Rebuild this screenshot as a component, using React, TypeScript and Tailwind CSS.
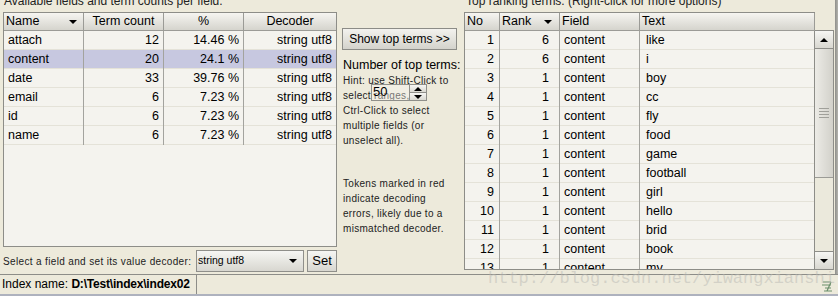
const fields = [
  { name: 'attach', count: 12, pct: '14.46 %' },
  { name: 'content', count: 20, pct: '24.1 %' },
  { name: 'date', count: 33, pct: '39.76 %' },
  { name: 'email', count: 6, pct: '7.23 %' },
  { name: 'id', count: 6, pct: '7.23 %' },
  { name: 'name', count: 6, pct: '7.23 %' },
];

const terms = ['like', 'i', 'boy', 'cc', 'fly', 'food', 'game', 'football', 'girl', 'hello', 'brid', 'book', 'my'];

function SortArrow() {
  return <span className="w-0 h-0 border-l-[4px] border-r-[4px] border-t-[4px] border-l-transparent border-r-transparent border-t-black" />;
}

function UpArrow() {
  return <span className="w-0 h-0 border-l-[4px] border-r-[4px] border-b-[4px] border-l-transparent border-r-transparent border-b-black" />;
}

const headCell = 'h-[17px] leading-[17px] border-r border-[#9b9b96] bg-gradient-to-b from-[#f6f5f1] to-[#d5d4cd]';

export default function App() {
  return (
    <div className="relative w-[838px] h-[296px] overflow-hidden bg-[#edeadb] font-['Liberation_Sans',sans-serif] text-black flex flex-col">
      <div className="flex h-[274px]">
        {/* left: fields */}
        <div className="w-[340px] flex flex-col">
          <div className="h-[12px] overflow-hidden pl-[4px]">
            <div className="-mt-[6px] text-[12px] leading-[14px] text-[#222]">Available fields and term counts per field.</div>
          </div>
          <div className="ml-[3px] w-[334px] h-[235px] border border-[#8d8d88] bg-[#f4f3ee] flex flex-col">
            <div className="grid grid-cols-[80px_80px_80px_1fr] border-b border-[#9b9b96] text-[12.5px]">
              <div className={`${headCell} pl-[2px] pr-[6px] flex items-center justify-between`}>
                <span>Name</span>
                <SortArrow />
              </div>
              <div className={`${headCell} text-center`}>Term count</div>
              <div className={`${headCell} text-center`}>%</div>
              <div className={`${headCell} text-center border-r-0`}>Decoder</div>
            </div>
            {fields.map((f) => (
              <div
                key={f.name}
                className={`grid grid-cols-[80px_80px_80px_1fr] h-[19px] leading-[19px] text-[12.5px] border-b border-[#e4e2d8] ${f.name === 'content' ? 'bg-[#c7c8e0]' : ''}`}
              >
                <div className="pl-[4px] border-r border-[#a3a39e]">{f.name}</div>
                <div className="pr-[4px] text-right border-r border-[#a3a39e]">{f.count}</div>
                <div className="pr-[4px] text-right border-r border-[#a3a39e]">{f.pct}</div>
                <div className="pr-[4px] text-right">string utf8</div>
              </div>
            ))}
          </div>
          <div className="mt-[3px] h-[22px] flex items-stretch pl-[3px]">
            <div className="w-[193px] flex items-center text-[10px] tracking-[0.35px] text-[#222]">Select a field and set its value decoder:</div>
            <div className="w-[108px] border border-[#8f8f8a] bg-gradient-to-b from-[#f6f6f3] to-[#d8d7d0] flex items-center justify-between pl-[1px] pr-[6px] text-[10.5px]">
              <span>string utf8</span>
              <SortArrow />
            </div>
            <div className="ml-[3px] w-[30px] border border-[#8f8f8a] bg-gradient-to-b from-[#f6f6f3] to-[#d8d7d0] flex items-center justify-center text-[13px]">Set</div>
          </div>
        </div>

        {/* middle: controls */}
        <div className="relative w-[124px] pt-[28px] pl-[2px]">
          <div className="w-[115px] h-[22px] border border-[#8c8c87] bg-gradient-to-b from-[#f3f2ee] to-[#d4d3cc] flex items-center justify-center text-[12px]">
            Show top terms &gt;&gt;
          </div>
          <div className="mt-[8px] pl-[1px] text-[12.5px] leading-[15px] whitespace-nowrap">Number of top terms:</div>
          <div className="pl-[1px] text-[10px] leading-[15px] tracking-[0.3px] text-[#222]">
            <div>Hint: use Shift-Click to</div>
            <div>select ranges, or</div>
            <div>Ctrl-Click to select</div>
            <div>multiple fields (or</div>
            <div>unselect all).</div>
            <div className="mt-[28px]">Tokens marked in red</div>
            <div>indicate decoding</div>
            <div>errors, likely due to a</div>
            <div>mismatched decoder.</div>
          </div>
          {/* spinner lying over the hint text */}
          <div className="absolute left-[31px] top-[84px] w-[56px] h-[17px] flex border border-[#8f8f8a]">
            <div className="w-[37px] bg-[#f7f6f2]/40 text-[13px] leading-[13px] pl-[1px]">50</div>
            <div className="flex-1 flex flex-col border-l border-[#8f8f8a]">
              <div className="flex-1 flex items-center justify-center bg-gradient-to-b from-[#f6f6f3] to-[#dad9d2] border-b border-[#8f8f8a]">
                <UpArrow />
              </div>
              <div className="flex-1 flex items-center justify-center bg-gradient-to-b from-[#f6f6f3] to-[#dad9d2]">
                <SortArrow />
              </div>
            </div>
          </div>
        </div>

        {/* right: top terms */}
        <div className="w-[371px] flex flex-col">
          <div className="h-[12px] overflow-hidden pl-[2px]">
            <div className="-mt-[6px] text-[12px] leading-[14px] text-[#222] whitespace-nowrap">Top ranking terms. (Right-click for more options)</div>
          </div>
          <div className="w-[370px] h-[258px] flex">
            <div className="w-[351px] flex flex-col border-l border-b border-[#8d8d88] border-t">
              <div className="grid grid-cols-[35px_60px_80px_1fr] border-b border-[#9b9b96] text-[12.5px]">
                <div className={`${headCell} pl-[2px]`}>No</div>
                <div className={`${headCell} pl-[2px] pr-[7px] flex items-center justify-between`}>
                  <span>Rank</span>
                  <SortArrow />
                </div>
                <div className={`${headCell} pl-[2px]`}>Field</div>
                <div className={`${headCell} pl-[2px] border-r border-[#8d8d88]`}>Text</div>
              </div>
              <div className="flex-1 overflow-hidden bg-[#f4f3ee] border-r border-[#8d8d88]">
                {terms.map((t, i) => (
                  <div key={t} className="grid grid-cols-[35px_60px_80px_1fr] h-[19px] leading-[19px] text-[12.5px] border-b border-[#e4e2d8]">
                    <div className="pr-[5px] text-right border-r border-[#a3a39e]">{i + 1}</div>
                    <div className="pr-[10px] text-right border-r border-[#a3a39e]">{i < 2 ? 6 : 1}</div>
                    <div className="pl-[4px] border-r border-[#a3a39e]">content</div>
                    <div className="pl-[6px]">{t}</div>
                  </div>
                ))}
              </div>
            </div>
            {/* scrollbar */}
            <div className="w-[19px] flex flex-col pt-[18px]">
              <div className="flex-1 flex flex-col border-r border-b border-t border-[#8d8d88] bg-[#ebe9dc]">
                <div className="h-[18px] flex items-center justify-center border-b border-[#8d8d88] bg-gradient-to-b from-[#f6f6f3] to-[#d8d7d0]">
                  <UpArrow />
                </div>
                <div className="h-[129px] border-b border-[#9b9b96] bg-gradient-to-r from-[#ecebe6] to-[#d2d1ca] flex flex-col items-center justify-center gap-[2px]">
                  <div className="w-[10px] h-px bg-[#a0a09a]" />
                  <div className="w-[10px] h-px bg-[#a0a09a]" />
                  <div className="w-[10px] h-px bg-[#a0a09a]" />
                  <div className="w-[10px] h-px bg-[#a0a09a]" />
                </div>
                <div className="flex-1" />
                <div className="h-[18px] flex items-center justify-center border-t border-[#8d8d88] bg-gradient-to-b from-[#f6f6f3] to-[#d8d7d0]">
                  <SortArrow />
                </div>
              </div>
            </div>
          </div>
        </div>
        <div className="w-[3px] bg-gradient-to-r from-[#8e8e8a] to-[#b4b4ae]" />
      </div>

      {/* status bar */}
      <div className="h-[22px] border-t border-[#8d8d88] border-b-2 border-b-[#aeb2be] flex">
        <div className="w-[197px] border-r border-[#8d8d88] pl-[2px] text-[12px] leading-[19px] whitespace-nowrap">
          Index name: <span className="font-bold tracking-[-0.2px]">D:\Test\index\index02</span>
        </div>
        <div className="flex-1" />
        <svg width="14" height="14" viewBox="0 0 14 14" className="mt-[4px] mr-[4px]">
          <path d="M3 3h8M2 6h9M5 9h6M4 12h8M11 3L7 12" stroke="#6c8f6c" strokeWidth="1.2" fill="none" />
        </svg>
      </div>

      {/* watermark over the page */}
      <div className="absolute left-[488px] top-[266px] text-[17px] font-['Liberation_Mono',monospace] text-[#b9b9b4]/50 whitespace-nowrap pointer-events-none">
        http://blog.csdn.net/yiwangxianshi
      </div>
    </div>
  );
}
